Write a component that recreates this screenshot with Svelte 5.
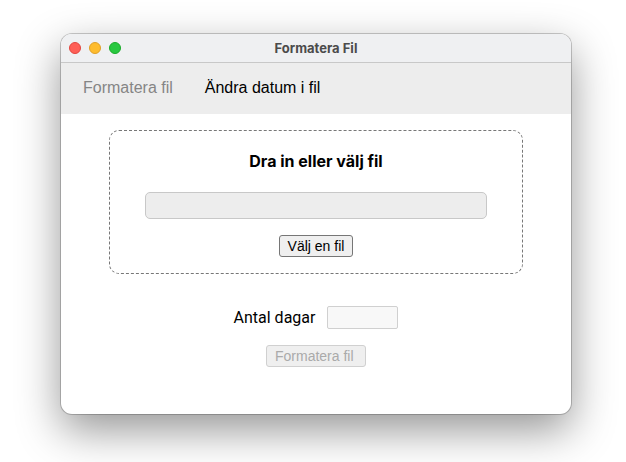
<script>
  let fileName = $state('');
  let days = $state('');
  let picker;

  const ready = $derived(fileName !== '' && days !== '');

  function take(files) {
    if (files && files.length) fileName = files[0].name;
  }

  function drop(event) {
    event.preventDefault();
    take(event.dataTransfer.files);
  }
</script>

<div class="desktop">
  <div class="window">
    <header class="titlebar">
      <div class="lights">
        <button class="light close" aria-label="Stäng"></button>
        <button class="light minimise" aria-label="Minimera"></button>
        <button class="light zoom" aria-label="Zooma"></button>
      </div>
      <span class="title">Formatera Fil</span>
    </header>

    <nav>
      <a class="current" href="#formatera">Formatera fil</a>
      <a href="#datum">Ändra datum i fil</a>
    </nav>

    <main>
      <section class="dropzone" role="group" aria-labelledby="drop-title" ondragover={(e) => e.preventDefault()} ondrop={drop}>
        <h1 id="drop-title">Dra in eller välj fil</h1>
        <input class="path" type="text" aria-labelledby="drop-title" value={fileName} disabled />
        <button class="action" onclick={() => picker.click()}>Välj en fil</button>
        <input type="file" hidden bind:this={picker} onchange={() => take(picker.files)} />
      </section>

      <form onsubmit={(e) => e.preventDefault()}>
        <div class="field">
          <label for="days">Antal dagar</label>
          <input id="days" type="text" inputmode="numeric" bind:value={days} disabled={!fileName} />
        </div>
        <button class="action submit" disabled={!ready}>Formatera fil</button>
      </form>
    </main>
  </div>
</div>

<style>
  :global(body) {
    background: #fff;
  }

  .desktop {
    box-sizing: border-box;
    min-height: 100vh;
    padding: 34px 55px 48px 61px;
    display: flex;
    overflow: hidden;
    font-family: Inter, "Liberation Sans", sans-serif;
    font-size: 16px;
    line-height: 20px;
    color: #000;
  }

  .window {
    flex: 1;
    display: flex;
    flex-direction: column;
    background: #fff;
    border-radius: 11px;
    box-shadow:
      0 0 0 1px rgba(0, 0, 0, 0.2),
      0 16px 44px rgba(0, 0, 0, 0.42);
  }

  .titlebar {
    display: grid;
    grid-template-columns: 1fr auto 1fr;
    align-items: center;
    height: 28px;
    padding: 0 8px;
    background: #eff0f2;
    border-bottom: 1px solid #c8c8c8;
    border-radius: 11px 11px 0 0;
  }

  .lights {
    display: flex;
    gap: 8px;
  }

  .light {
    box-sizing: border-box;
    width: 12px;
    height: 12px;
    padding: 0;
    border: 1px solid;
    border-radius: 50%;
  }

  .close {
    background: #ff5f57;
    border-color: #e2463f;
  }

  .minimise {
    background: #febc2e;
    border-color: #e0a028;
  }

  .zoom {
    background: #28c840;
    border-color: #1aab29;
  }

  .title {
    font-size: 13px;
    font-weight: 700;
    color: #4b4b4b;
  }

  nav {
    display: flex;
    gap: 32px;
    padding: 15px 22px 16px;
    background: #ededed;
    font-family: "Liberation Sans", Arial, sans-serif;
  }

  nav a {
    color: #000;
    text-decoration: none;
  }

  nav .current {
    color: #858585;
  }

  main {
    display: flex;
    flex-direction: column;
    align-items: center;
    gap: 32px;
    padding: 16px 48px;
  }

  .dropzone {
    box-sizing: border-box;
    width: 100%;
    display: flex;
    flex-direction: column;
    align-items: center;
    gap: 16px;
    padding: 20px 35px 16px;
    border: 1px dashed #777;
    border-radius: 10px;
  }

  h1 {
    margin: 0 0 5px;
    font-size: 16px;
    font-weight: 700;
  }

  .path {
    box-sizing: border-box;
    width: 100%;
    height: 27px;
    background: #ededed;
    border: 1px solid #c8c8c8;
    border-radius: 5px;
  }

  .action {
    box-sizing: border-box;
    height: 22px;
    padding: 0 8px;
    background: #efefef;
    border: 1px solid #767676;
    border-radius: 3px;
    font-family: "Liberation Sans", Arial, sans-serif;
    font-size: 14px;
    line-height: 20px;
    color: #000;
  }

  .submit {
    width: 100px;
    text-align: left;
  }

  .action:disabled {
    color: #aaa;
    border-color: #d0d0d0;
  }

  form {
    display: flex;
    flex-direction: column;
    align-items: center;
    gap: 16px;
  }

  .field {
    display: flex;
    align-items: center;
    gap: 12px;
    font-family: Roboto, "Liberation Sans", sans-serif;
  }

  #days {
    box-sizing: border-box;
    width: 71px;
    height: 23px;
    background: #f8f8f8;
    border: 1px solid #d0d0d0;
    border-radius: 2px;
  }
</style>
